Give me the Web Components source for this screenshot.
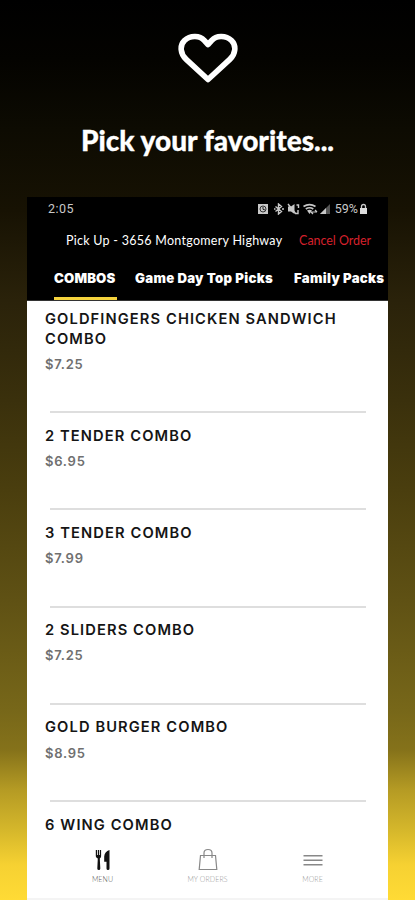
<!DOCTYPE html>
<html lang="en">
<head>
<meta charset="utf-8">
<title>Pick your favorites</title>
<style>
  body { margin: 0; background: #000; font-family: Inter, "Liberation Sans", sans-serif; }
</style>
</head>
<body>
<promo-page>
  <promo-header slot="header">Pick your favorites...</promo-header>
  <phone-screen>
    <status-bar slot="top" time="2:05" battery="59%"></status-bar>
    <order-bar slot="top">
      <span>Pick Up - 3656 Montgomery Highway</span>
      <span slot="action">Cancel Order</span>
    </order-bar>
    <tab-bar slot="top">
      <tab-item active style="--w: 63px">COMBOS</tab-item>
      <tab-item style="--w: 141px">Game Day Top Picks</tab-item>
      <tab-item style="--w: 91px">Family Packs</tab-item>
    </tab-bar>
    <menu-item first price="$7.25">GOLDFINGERS CHICKEN SANDWICH COMBO</menu-item>
    <menu-item price="$6.95">2 TENDER COMBO</menu-item>
    <menu-item price="$7.99">3 TENDER COMBO</menu-item>
    <menu-item price="$7.25">2 SLIDERS COMBO</menu-item>
    <menu-item price="$8.95">GOLD BURGER COMBO</menu-item>
    <menu-item>6 WING COMBO</menu-item>
    <nav-bar slot="bottom"></nav-bar>
  </phone-screen>
</promo-page>
<script>
const define = (tag, template) => customElements.define(tag, class extends HTMLElement {
  constructor() {
    super();
    this.attachShadow({ mode: "open" });
  }
  connectedCallback() {
    this.shadowRoot.innerHTML = typeof template === "function" ? template(this) : template;
  }
});

define("promo-page", `
<style>
  :host { display: flex; flex-direction: column; width: 415px; height: 900px; overflow: hidden;
          background: linear-gradient(#000 0, #040300 60px, #0d0b02 130px, #171203 210px, #2a220a 300px,
            #3a300c 400px, #4a3e0e 490px, #5f5114 600px, #776719 710px, #85721a 750px,
            #b59b24 790px, #d5b72b 830px, #f6d132 865px, #ffdb35 900px); }
</style>
<slot name="header"></slot>
<slot></slot>
`);

define("promo-header", `
<style>
  :host { display: flex; flex-direction: column; align-items: center; box-sizing: border-box; height: 197px;
          padding-top: 33px; color: #fff; font: 900 28px/36px Lato, sans-serif; }
  svg   { display: block; margin-bottom: 38px; }
  .title { white-space: nowrap; -webkit-text-stroke: .3px #fff; }
</style>
<svg width="60" height="51" viewBox="0 0 60 51" fill="none" stroke="#fff" stroke-width="5.6" stroke-linejoin="round">
  <path d="M30 46.5L8.2 26.4C2.2 20.7 1.5 12.5 6.5 7.6C12.5 1.8 22 2.7 26.2 7.4L30 11.5L33.8 7.4C38 2.7 47.5 1.8 53.5 7.6C58.5 12.5 57.8 20.7 51.8 26.4Z"/>
</svg>
<div class="title"><slot></slot></div>
`);

define("phone-screen", `
<style>
  :host { display: flex; flex-direction: column; width: 361px; height: 703px; margin-left: 27px; background: #fff; }
  .top  { height: 103px; background: #000; color: #fff; border-bottom: 1px solid #333; }
  .list { flex: 1; min-height: 0; overflow: hidden; }
</style>
<div class="top"><slot name="top"></slot></div>
<div class="list"><slot></slot></div>
<slot name="bottom"></slot>
`);

define("status-bar", el => `
<style>
  :host { display: flex; justify-content: space-between; align-items: center; box-sizing: border-box; height: 24px;
          padding: 0 20px 0 21px; color: #c8c8c8; font: 12.5px/24px Roboto, sans-serif; }
  .time { letter-spacing: .5px; }
  .icons { display: flex; align-items: center; }
  svg { display: block; margin-right: 4px; }
  .lock { margin: 0 0 0 1px; }
</style>
<span class="time">${el.getAttribute("time")}</span>
<span class="icons">
  <svg width="74" height="12" viewBox="0 0 74 12" fill="none" stroke="#c8c8c8">
    <path fill="#c8c8c8" stroke="none" d="M1 1h10v10H1z"/>
    <circle cx="6" cy="6" r="3" stroke="#333"/><path stroke="#222" d="M6 4v2.3l2 .7"/>
    <path stroke-width="1.4" d="M18.5 3.5l6 5L21.5 11V1l3 2.5l-6 5M17 6h1.5M25 6h2"/>
    <path fill="#c8c8c8" stroke="none" d="M31 3.5h3L37.5 1v10L34 8.500H31z"/>
    <path stroke-width="1.4" d="M31 1l8 10M39.500 2h2v3M41 7v3.500h-2"/>
    <path stroke-width="1.7" d="M46.500 3.500q6-3.800 12 0M48.800 6q3.700-2.500 7.500 0"/>
    <path fill="#c8c8c8" stroke="none" d="M50 7.500q2.600-1.500 5 0L52.500 11z"/>
    <path stroke-width="1.2" d="M54 9h6M58 7l2 2M54 9l2 2"/>
    <path fill="#555" stroke="none" d="M73 1v10H63z"/>
    <path fill="#c8c8c8" stroke="none" d="M69 5v6H63z"/>
  </svg>
  <span>${el.getAttribute("battery")}</span>
  <svg class="lock" width="9" height="12" viewBox="0 0 9 12">
    <path fill="none" stroke="#c8c8c8" stroke-width="1.3" d="M2.500 5V3.500q0-2 2-2t2 2V5"/>
    <path fill="#ddd" d="M1 5h7v6H1z"/>
  </svg>
</span>
`);

define("order-bar", `
<style>
  :host { display: flex; justify-content: space-between; box-sizing: border-box; height: 40px; padding: 0 17px 0 39px;
          font: 12.5px/39px Lato, sans-serif; white-space: nowrap; }
  .action { color: #d5202c; letter-spacing: -.05px; }
  .place  { letter-spacing: .27px; }
</style>
<span class="place"><slot></slot></span>
<span class="action"><slot name="action"></slot></span>
`);

define("tab-bar", `
<style>
  :host { display: flex; gap: 18px; height: 39px; padding-left: 27px; overflow: hidden; }
</style>
<slot></slot>
`);

define("tab-item", `
<style>
  :host { display: block; flex: none; box-sizing: border-box; width: var(--w); height: 39px; white-space: nowrap;
          color: #fff; font: 900 13.2px/35px Inter, sans-serif; letter-spacing: .3px; }
  :host([active]) { border-bottom: 3px solid #f5d33d; letter-spacing: .15px; }
</style>
<slot></slot>
`);

define("menu-item", el => `
<style>
  :host { display: block; box-sizing: border-box; height: 97.3px; padding: 13.5px 18px 0; }
  :host([first]) { height: 112px; padding-top: 9px; }
  .wrap  { display: flex; flex-direction: column; height: 100%; }
  .name  { color: #151515; font: 600 14.7px/19.500px Inter, sans-serif; letter-spacing: 1.1px; }
  .price { flex: 1; margin-top: 4.700px; color: #707070; font: 600 13px/20px Inter, sans-serif; letter-spacing: .75px; }
  .line  { height: 2px; margin: 0 4px 0 5px; background: #dedede; }
</style>
<div class="wrap">
  <div class="name"><slot></slot></div>
  <div class="price">${el.getAttribute("price") || ""}</div>
  <div class="line"></div>
</div>
`);

define("nav-bar", `
<style>
  :host { display: flex; justify-content: center; box-sizing: border-box; height: 59px; background: #fff;
          padding-top: 7px; border-bottom: 2px solid #f4f4f4; }
  .item { display: flex; flex-direction: column; align-items: center; width: 105px; color: #999;
          font: 300 7px/10px Lato, sans-serif; letter-spacing: .1px; }
  .item.on { color: #555; }
  svg { display: block; margin-bottom: 2px; }
</style>
<div class="item on">
  <svg width="16" height="24" viewBox="0 0 16 24" fill="#111">
    <path d="M.8 2h1.300v5h.8V2h1.100v5h.8V2h1.300v6.200q0 1.500-1.300 2.200l.5 10q0 1.600-1.500 1.600t-1.500-1.600l.5-10Q.8 9.700.8 8.200z"/>
    <path d="M14.500 2v18.500q0 1.500-1.500 1.500t-1.500-1.500v-6.700H9.200V8.500Q9.500 3.500 14.500 2z"/>
  </svg>MENU
</div>
<div class="item">
  <svg width="20" height="24" viewBox="0 0 20 24" fill="none" stroke="#888" stroke-width="1.200">
    <path d="M2.500 7.500h15l1.300 14H1.200zM6 10V5q0-3.500 4-3.500t4 3.500v5"/>
  </svg>MY ORDERS
</div>
<div class="item">
  <svg width="20" height="24" viewBox="0 0 20 24" fill="none" stroke="#888" stroke-width="1.600">
    <path d="M.5 7.700h19M.5 12.200h19M.5 16.700h19"/>
  </svg>MORE
</div>
`);
</script>
</body>
</html>
